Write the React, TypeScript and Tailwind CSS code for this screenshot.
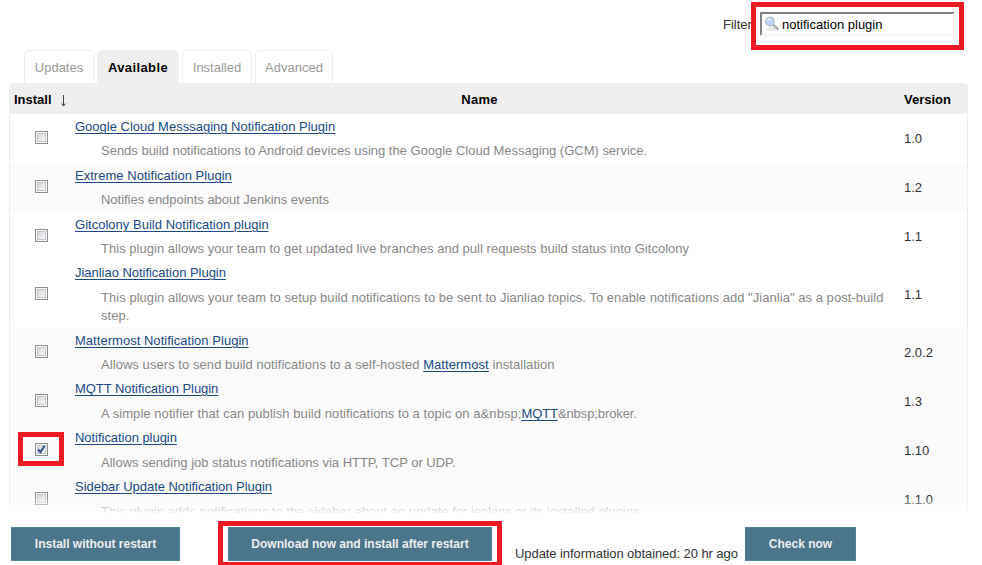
import type { ReactNode } from "react";

const link = "text-[#204a87] underline underline-offset-[2px] decoration-1";

type Plugin = {
  name: string;
  nameTracking: string;
  text: ReactNode;
  textTracking: string;
  version: string;
  row: string;
  nameTop: string;
  textTop: string;
  shaded?: boolean;
  checked?: boolean;
};

const plugins: Plugin[] = [
  { name: "Google Cloud Messsaging Notification Plugin", nameTracking: "", text: "Sends build notifications to Android devices using the Google Cloud Messaging (GCM) service.", textTracking: "tracking-[-0.01px]", version: "1.0", row: "h-[49px] pb-[2px]", nameTop: "pt-[4px]", textTop: "pt-[1px]" },
  { name: "Extreme Notification Plugin", nameTracking: "tracking-[0.03px]", text: "Notifies endpoints about Jenkins events", textTracking: "tracking-[-0.03px]", version: "1.2", row: "h-[48px] pb-[1px]", nameTop: "pt-[4px]", textTop: "pt-[1px]", shaded: true },
  { name: "Gitcolony Build Notification plugin", nameTracking: "tracking-[0.02px]", text: "This plugin allows your team to get updated live branches and pull requests build status into Gitcolony", textTracking: "tracking-[0.027px]", version: "1.1", row: "h-[49px]", nameTop: "pt-[5px]", textTop: "pt-[1px]" },
  { name: "Jianliao Notification Plugin", nameTracking: "tracking-[-0.03px]", text: <>This plugin allows your team to setup build notifications to be sent to Jianliao topics. To enable notifications add "Jianlia" as a post-build<br />step.</>, textTracking: "tracking-[0.042px]", version: "1.1", row: "h-[67px]", nameTop: "pt-[4px]", textTop: "pt-[2px]" },
  { name: "Mattermost Notification Plugin", nameTracking: "tracking-[0.03px]", text: <>Allows users to send build notifications to a self-hosted <a className={link}>Mattermost</a> installation</>, textTracking: "tracking-[0.06px]", version: "2.0.2", row: "h-[49px]", nameTop: "pt-[5px]", textTop: "pt-[1px]", shaded: true },
  { name: "MQTT Notification Plugin", nameTracking: "tracking-[-0.04px]", text: <><span className="tracking-[0.065px]">A simple notifier that can publish build notifications to a topic on a&amp;nbsp;</span><a className={link}>MQTT</a>&amp;nbsp;broker.</>, textTracking: "tracking-[-0.1px]", version: "1.3", row: "h-[49px]", nameTop: "pt-[4px]", textTop: "pt-[2px]", shaded: true },
  { name: "Notification plugin", nameTracking: "tracking-[-0.04px]", text: "Allows sending job status notifications via HTTP, TCP or UDP.", textTracking: "tracking-[-0.01px]", version: "1.10", row: "h-[49px]", nameTop: "pt-[4px]", textTop: "pt-[2px]", shaded: true, checked: true },
  { name: "Sidebar Update Notification Plugin", nameTracking: "tracking-[-0.03px]", text: "This plugin adds notifications to the sidebar about an update for jenkins or its installed plugins", textTracking: "tracking-[0.01px]", version: "1.1.0", row: "h-[49px]", nameTop: "pt-[4px]", textTop: "pt-[2px]", shaded: true },
];

function Checkbox({ checked }: { checked?: boolean }) {
  return (
    <span className="relative flex h-[13px] w-[13px] border border-[#8e8f8f] bg-[#f8f8f8] p-px">
      <span className="h-full w-full border border-[#c4c7cb] bg-linear-to-br from-[#d3d6db] to-[#f8f8f8]" />
      {checked && (
        <svg className="absolute left-0 top-0 h-[11px] w-[11px]" viewBox="0 0 11 11" fill="none">
          <path d="M2.2 5.3 L4.4 8.3 L8.6 1.8" stroke="#31528f" strokeWidth="2" />
        </svg>
      )}
      {checked && <span className="absolute -left-[18px] -top-[12px] h-[34px] w-[46px] border-[5px] border-[#ed1c24]" />}
    </span>
  );
}

function Tab({ label, size, active }: { label: string; size: string; active?: boolean }) {
  return (
    <div
      className={`flex h-[33px] items-center justify-center rounded-t-[5px] border border-b-0 pt-[1px] ${size} ${
        active
          ? "border-[#efefef] bg-[#efefef] font-bold tracking-[0.4px] text-black"
          : "border-[#ededed] bg-white text-[#999]"
      }`}
    >
      {label}
    </div>
  );
}

function Button({ label, size }: { label: string; size: string }) {
  return (
    <button
      className={`h-[34px] shrink-0 whitespace-nowrap border border-[#4f8298] bg-[#4b758b] text-[12px] leading-[18px] font-bold text-[#eee] ${size}`}
    >
      {label}
    </button>
  );
}

function SearchIcon() {
  return (
    <svg className="h-[16px] w-[16px] shrink-0" viewBox="0 0 16 16">
      <ellipse cx="7.5" cy="13" rx="6" ry="2" fill="#ececec" />
      <path d="M9.5 9 L13.6 12.8" stroke="#9a9a9a" strokeWidth="2.2" strokeLinecap="round" />
      <path d="M10 9 L13.4 12.1" stroke="#d0d0d0" strokeWidth="0.8" />
      <circle cx="6" cy="5.5" r="4.4" fill="#b9d6f2" stroke="#bfc3c7" strokeWidth="1.3" />
      <path d="M3 5.3 A3.2 3.2 0 0 1 7 2.5 Q6.5 5 3 5.3" fill="#e6f2fc" />
    </svg>
  );
}

export default function App() {
  return (
    <div className="flex h-[565px] w-[982px] flex-col overflow-hidden bg-white font-['Liberation_Sans',Arial,sans-serif] text-[13px] leading-[18px] text-[#333]">
      <div className="flex h-[50px] shrink-0 pl-[723px]">
        <span className="w-[28px] pt-[16px] whitespace-nowrap">Filter:</span>
        <div className="relative mt-[2px] h-[48px] w-[213px] border-[5px] border-[#ed1c24] bg-white pl-[4px] pt-[5px]">
          <div className="flex h-[24px] w-[195px] items-center border-2 border-t-[#838383] border-r-[#f6f6f6] border-b-[#f6f6f6] border-l-[#838383] pl-[2px] text-black">
            <SearchIcon />
            <span className="ml-[2px] pt-[1px]">notification plugin</span>
          </div>
        </div>
      </div>

      <div className="flex h-[33px] shrink-0 gap-[3px] pl-[24px]">
        <Tab label="Updates" size="w-[70px]" />
        <Tab label="Available" size="w-[82px]" active />
        <Tab label="Installed" size="w-[70px]" />
        <Tab label="Advanced" size="w-[78px]" />
      </div>

      <div className="relative ml-[9px] h-[430px] w-[959px] shrink-0 overflow-hidden">
        <div className="flex h-[31px] items-center rounded-t-[4px] bg-[#efefef] pt-[2px] font-bold text-black">
          <div className="flex w-[62px] items-center pl-[5px]">
            Install
            <svg className="ml-[8px] mt-[3px] h-[12px] w-[7px]" viewBox="0 0 7 12" fill="none" stroke="#444">
              <path d="M3.5 0 V11 M1.5 8.5 L3.5 11 L5.5 8.5" />
            </svg>
          </div>
          <div className="w-[817px] text-center tracking-[0.3px]">Name</div>
          <div className="pl-[16px]">Version</div>
        </div>
        <div className="border-x border-[#ededed]">
          {plugins.map((p) => (
            <div key={p.name} className={`flex ${p.row} ${p.shaded ? "bg-[#fbfbfb]" : "bg-white"}`}>
              <div className="flex w-[65px] shrink-0 items-center pl-[25px]">
                <Checkbox checked={p.checked} />
              </div>
              <div className={`w-[829px] shrink-0 whitespace-nowrap ${p.nameTop}`}>
                <div className={`h-[23px] ${p.nameTracking}`}>
                  <a className={link}>{p.name}</a>
                </div>
                <div className={`pl-[26px] text-[#888] ${p.textTop} ${p.textTracking}`}>{p.text}</div>
              </div>
              <div className="flex items-center pt-[2px]">{p.version}</div>
            </div>
          ))}
        </div>
        <div className="absolute inset-x-0 bottom-0 h-[16px] bg-linear-to-b from-white/0 to-white/90" />
      </div>

      <div className="flex h-[52px] shrink-0 items-start pl-[11px] pt-[8px]">
        <div className="pt-[6px]">
          <Button label="Install without restart" size="w-[169px]" />
        </div>
        <div className="ml-[38px] h-[46px] w-[284px] shrink-0 border-[5px] border-[#ed1c24] pl-[5px] pt-[1px]">
          <Button label="Download now and install after restart" size="w-[264px]" />
        </div>
        <span className="ml-[13px] w-[230px] shrink-0 whitespace-nowrap pt-[24px] tracking-[-0.07px]">Update information obtained: 20 hr ago</span>
        <div className="pt-[6px]">
          <Button label="Check now" size="w-[111px]" />
        </div>
      </div>
    </div>
  );
}
